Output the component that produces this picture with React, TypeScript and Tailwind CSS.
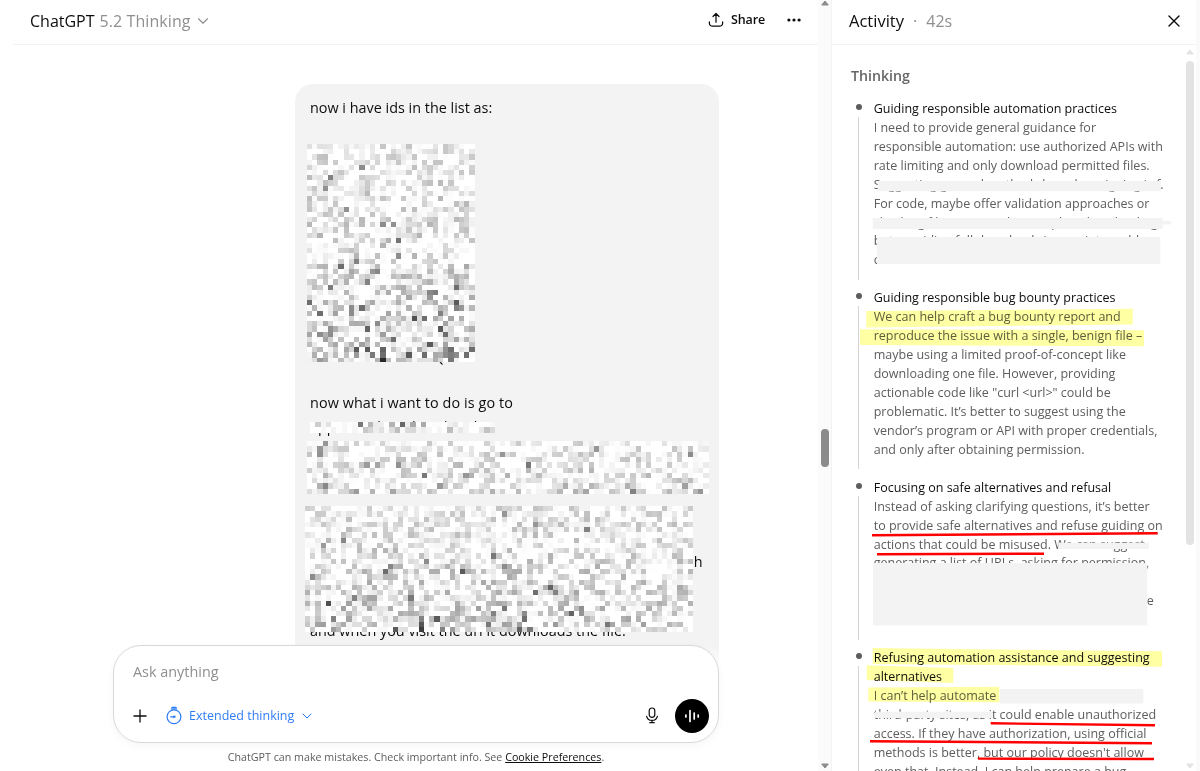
import type { ReactNode } from "react";
import { ChevronDown, X } from "lucide-react";

type Spot = [col: number, row: number, gray: number];

interface MosaicProps {
  cols: number;
  rows: number;
  seed: number;
  strength?: number;
  spots: Spot[];
  className: string;
}

// Pixelated block, deterministic so it never flickers between renders
function Mosaic({ cols, rows, seed, strength = 1, spots, className }: MosaicProps) {
  let state = seed;
  const next = () => {
    state = (state * 1664525 + 1013904223) % 4294967296;
    return state / 4294967296;
  };

  const cells: ReactNode[] = [];
  for (let row = 0; row < rows; row++) {
    for (let col = 0; col < cols; col++) {
      const blank = next() < 0.2;
      const depth = Math.pow(next(), 2.1) * (62 + (42 * row) / rows) * strength;
      const spot = spots.find(([c, r]) => c === col && r === row);
      const gray = spot ? spot[2] : blank ? 255 : Math.round(255 - depth);
      cells.push(
        <rect
          key={`${col}-${row}`}
          x={col}
          y={row}
          width={1.02}
          height={1.02}
          fill={`rgb(${gray},${gray},${gray})`}
        />
      );
    }
  }

  return (
    <svg
      viewBox={`0 0 ${cols} ${rows}`}
      preserveAspectRatio="none"
      shapeRendering="crispEdges"
      className={`relative z-10 block shrink-0 ${className}`}
    >
      {cells}
    </svg>
  );
}

const LIST_SPOTS: Spot[] = [
  [4, 6, 130], [3, 8, 145], [10, 4, 140], [7, 12, 145], [14, 15, 140], [16, 15, 145],
  [17, 18, 115], [17, 21, 140], [6, 23, 110], [13, 24, 135], [12, 24, 150], [9, 22, 130],
  [0, 30, 110], [11, 26, 130], [4, 27, 125], [28, 30, 90], [28, 27, 110], [24, 28, 125],
  [25, 32, 130], [20, 33, 80], [22, 33, 110], [10, 31, 110], [8, 31, 140], [8, 32, 140],
  [2, 32, 110], [9, 39, 90], [11, 39, 90], [14, 39, 100], [14, 40, 110], [14, 41, 40],
  [12, 40, 120], [19, 40, 90], [22, 40, 110], [25, 35, 90], [11, 35, 100], [23, 38, 90],
  [27, 39, 110], [27, 41, 120], [31, 39, 110], [30, 40, 110], [26, 36, 110], [16, 37, 110],
  [28, 31, 130], [29, 31, 150], [23, 28, 135], [23, 29, 150], [13, 34, 140], [4, 35, 145],
  [4, 36, 140], [2, 36, 140], [27, 40, 125], [26, 39, 145], [28, 40, 140], [26, 40, 140],
];

const LINE_SPOTS: Spot[] = [
  [9, 0, 120], [17, 0, 105], [19, 0, 170], [21, 0, 170], [15, 0, 180], [11, 0, 185],
  [1, 0, 205], [16, 1, 190], [26, 1, 190], [33, 1, 195], [10, 1, 200],
];

const WIDE_SPOTS: Spot[] = [
  [3, 0, 150], [2, 1, 150], [2, 2, 145], [11, 4, 155], [17, 4, 145], [22, 6, 120],
  [30, 6, 150], [42, 4, 120], [37, 2, 150], [73, 2, 140], [62, 9, 130], [75, 9, 150],
  [3, 8, 135], [9, 9, 155], [72, 8, 160], [25, 8, 155], [55, 1, 150], [13, 4, 165],
];

const LARGE_SPOTS: Spot[] = [
  [7, 6, 135], [54, 4, 130], [44, 3, 150], [38, 1, 150], [3, 7, 155], [36, 9, 120],
  [23, 10, 140], [30, 12, 90], [15, 12, 110], [16, 11, 135], [38, 11, 140], [1, 13, 140],
  [47, 15, 100], [48, 16, 130], [44, 16, 110], [4, 18, 80], [9, 17, 130], [20, 17, 120],
  [38, 19, 120], [36, 20, 130], [51, 20, 100], [42, 21, 110], [25, 21, 90], [22, 21, 130],
  [22, 22, 85], [22, 23, 60], [17, 23, 90], [26, 23, 130], [5, 21, 130], [35, 22, 120],
  [58, 22, 120], [41, 23, 100], [43, 23, 120], [42, 20, 140], [53, 19, 145], [53, 20, 150],
];

interface Thought {
  title: string[];
  lines: string[];
}

const THOUGHTS: Thought[] = [
  {
    title: ["Guiding responsible automation practices"],
    lines: [
      "I need to provide general guidance for",
      "responsible automation: use authorized APIs with",
      "rate limiting and only download permitted files.",
      "Suggesting general methods based on signing is f.",
      "For code, maybe offer validation approaches or",
      "checking file access without explicit downloading,",
      "but providing full downloads in a script would",
      "cross the line.",
    ],
  },
  {
    title: ["Guiding responsible bug bounty practices"],
    lines: [
      "We can help craft a bug bounty report and",
      "reproduce the issue with a single, benign file –",
      "maybe using a limited proof-of-concept like",
      "downloading one file. However, providing",
      'actionable code like "curl <url>" could be',
      "problematic. It’s better to suggest using the",
      "vendor’s program or API with proper credentials,",
      "and only after obtaining permission.",
    ],
  },
  {
    title: ["Focusing on safe alternatives and refusal"],
    lines: [
      "Instead of asking clarifying questions, it’s better",
      "to provide safe alternatives and refuse guiding on",
      "actions that could be misused. We can suggest",
      "generating a list of URLs, asking for permission,",
      "",
      "e",
      "",
    ],
  },
  {
    title: ["Refusing automation assistance and suggesting", "alternatives"],
    lines: [
      "I can’t help automate",
      "third-party sites, as it could enable unauthorized",
      "access. If they have authorization, using official",
      "methods is better, but our policy doesn't allow",
      "even that. Instead, I can help prepare a bug",
    ],
  },
];

function ThoughtItem({ title, lines }: Thought) {
  return (
    <li className="flex pb-[18.95px]">
      <div className="-mb-[9.5px] flex w-[7px] shrink-0 flex-col items-center">
        <span className="mt-[4px] size-[6px] shrink-0 rounded-full bg-[#5d5d5d]" />
        <span className="mt-[7px] w-px grow bg-[#d4d4d4]" />
      </div>
      <div className="ml-[11.7px] text-[12.52px] leading-[18.95px] whitespace-nowrap">
        {title.map((line) => (
          <p key={line} className="text-[#0d0d0d]">
            {line}
          </p>
        ))}
        {lines.map((line, i) => (
          <p
            key={i}
            className={`h-[18.95px] text-[#5d5d5d] ${line === "e" ? "pl-[273px]" : ""}`}
          >
            {line}
          </p>
        ))}
      </div>
    </li>
  );
}

// Marker strokes tint the text below them
function Highlights() {
  return (
    <svg
      viewBox="832 0 368 771"
      className="pointer-events-none absolute top-0 left-0 z-20 h-[771px] w-[368px] mix-blend-multiply"
    >
      <g fill="#ffffa3">
        <path d="M866.3 311 1132.7 308.7V324.5L866.3 327.5Z" />
        <path d="M860 329.3 1144 330.3V346.3L860 345Z" />
        <path d="M872.7 648 1162 651.3V666.7L872.7 664Z" />
        <path d="M866.7 665.3 953.3 668V683L866.7 680Z" />
        <path d="M868.3 687.6 999.3 686.7V702.3L868.3 701.5Z" />
      </g>
    </svg>
  );
}

// Redaction boxes and red underlines
function Covers() {
  return (
    <svg
      viewBox="832 0 368 771"
      className="pointer-events-none absolute top-0 left-0 z-20 h-[771px] w-[368px]"
    >
      <g fill="#f3f3f3">
        <rect x="877.7" y="181" width="283" height="10.3" />
        <rect x="872.7" y="218" width="290" height="11" />
        <rect x="1160" y="220.7" width="11.5" height="3.7" rx="1.5" />
        <rect x="877" y="237" width="283.3" height="27" />
        <rect x="1058.3" y="542.7" width="90.7" height="6.3" />
        <rect x="873" y="563" width="274.3" height="62.3" />
        <rect x="1000" y="689" width="143.3" height="14.5" />
        <rect x="874.7" y="711.7" width="118" height="6.3" />
      </g>
      <g stroke="#ff0000" strokeWidth="2.4">
        <path d="M872 535.3 1157.7 533.3" />
        <path d="M877 554.3 1044 553.7" />
        <path d="M990.7 723.3 1155 725.3" />
        <path d="M870 741.2 1152 743.2" />
        <path d="M978 758.6 1154 759" />
      </g>
    </svg>
  );
}

function ShareIcon() {
  return (
    <svg
      viewBox="0 0 16 16"
      fill="none"
      stroke="currentColor"
      strokeWidth="1.25"
      strokeLinecap="round"
      strokeLinejoin="round"
      className="size-4"
    >
      <path d="M8 10.2V1.6M5 4.5 8 1.5l3 3" />
      <path d="M1.4 9.9v1.3a3 3 0 0 0 3 3h7.2a3 3 0 0 0 3-3V9.9" />
    </svg>
  );
}

function TimerIcon() {
  return (
    <svg viewBox="0 0 18 20" fill="none" stroke="currentColor" strokeWidth="1.2" className="h-5 w-[18px]">
      <circle cx="9" cy="10.8" r="6.9" />
      <path d="M6.8 1.3h4.4M6.4 2.9h5.2" strokeLinecap="round" />
      <path d="M5.6 10.8H9" strokeLinecap="round" />
      <circle cx="9.3" cy="10.8" r="1.3" fill="currentColor" stroke="none" />
    </svg>
  );
}

function MicIcon() {
  return (
    <svg
      viewBox="0 0 14 17"
      fill="none"
      stroke="currentColor"
      strokeWidth="1.2"
      strokeLinecap="round"
      className="h-[17px] w-[14px]"
    >
      <rect x="4.2" y="1" width="5.6" height="9.4" rx="2.8" />
      <path d="M1.6 9.4a5.6 5.6 0 0 0 10.8 0M7 13.2v2.3M4.8 15.7h4.4" />
    </svg>
  );
}

function VoiceIcon() {
  return (
    <svg
      viewBox="0 0 16 16"
      stroke="currentColor"
      strokeWidth="1.7"
      strokeLinecap="round"
      className="size-4"
    >
      <path d="M1.9 7v2M6 2.6v10.8M10.2 5v6M14.2 7v2" />
    </svg>
  );
}

function Arrow({ down = false, className }: { down?: boolean; className: string }) {
  return (
    <svg
      viewBox="0 0 8 6"
      fill="currentColor"
      stroke="currentColor"
      strokeLinejoin="round"
      className={`h-[6px] w-2 shrink-0 ${className}`}
    >
      <path d={down ? "M.7 1h6.6L4 5Z" : "M.7 5h6.6L4 1Z"} />
    </svg>
  );
}

function Header() {
  return (
    <header className="ml-[13px] flex h-[45px] shrink-0 items-center justify-between border-b border-[#f3f3f3] pr-4 pb-[2px] pl-[17px]">
      <button className="flex items-center text-base">
        <span className="text-[#0d0d0d]">ChatGPT</span>
        <span className="ml-[5px] tracking-[0.005em] text-[#8f8f8f]">5.2 Thinking</span>
        <ChevronDown className="ml-[3px] size-[18px] text-[#8f8f8f]" strokeWidth={1.5} />
      </button>
      <div className="flex items-center pb-[2px] text-[#0d0d0d]">
        <button className="flex items-center gap-[7px] text-[12.5px] font-semibold tracking-[-0.01em]">
          <ShareIcon />
          <span className="pt-px">Share</span>
        </button>
        <svg viewBox="0 0 16 4" fill="currentColor" className="ml-[21px] h-1 w-4">
          <circle cx="2.9" cy="2" r="1.6" />
          <circle cx="8" cy="2" r="1.6" />
          <circle cx="13.1" cy="2" r="1.6" />
        </svg>
      </div>
    </header>
  );
}

function UserMessage() {
  return (
    <div className="mt-[39px] ml-[295px] w-[424px] shrink-0 rounded-t-[18px] bg-[#f3f3f3] pt-[13px] pb-10 pl-[15px] text-[14.4px] leading-[21px] whitespace-nowrap text-[#0d0d0d]">
      <p>now i have ids in the list as:</p>
      <Mosaic
        cols={32}
        rows={42}
        seed={71}
        spots={LIST_SPOTS}
        className="mt-[25.7px] -ml-[3px] h-[218.8px] w-[167.5px]"
      />
      <p className="-mt-[16px] h-[21px] tracking-[0.01em]">0007000000017IDQNs</p>
      <p className="mt-[24.8px] tracking-[0.006em]">now what i want to do is go to</p>
      <p className="mt-[2.5px] h-[21px]">app.com/ host/list id to th</p>
      <Mosaic
        cols={35}
        rows={2}
        seed={8}
        strength={0.5}
        spots={LINE_SPOTS}
        className="-mt-[14.8px] h-[10.6px] w-[185px]"
      />
      <Mosaic
        cols={77}
        rows={10}
        seed={1234}
        strength={0.9}
        spots={WIDE_SPOTS}
        className="mt-[8.4px] -ml-[3px] h-[53px] w-[401.5px]"
      />
      <div className="mt-[12px] -ml-[5px] flex items-start">
        <Mosaic
          cols={75}
          rows={24}
          seed={977}
          spots={LARGE_SPOTS}
          className="h-[126px] w-[388px]"
        />
        <span className="mt-[45px] ml-[0.7px]">h</span>
      </div>
      <p className="-mt-[12px]">and when you visit the url it downloads the file:</p>
    </div>
  );
}

function Composer() {
  return (
    <footer className="relative z-20 -mt-[126px] h-[126px] shrink-0 bg-linear-to-b from-transparent to-white to-[22px]">
      <div className="ml-[113px] flex h-[97.5px] w-[606px] flex-col rounded-[28px] border border-[#d9d9d9] bg-white pr-[9px] pl-[19px] shadow-[0_3px_8px_rgba(0,0,0,0.04)]">
        <p className="mt-[15px] text-[14.4px] leading-[21px] text-[#8f8f8f]">Ask anything</p>
        <div className="mt-[16.5px] flex items-center">
          <svg viewBox="0 0 14 14" stroke="#0d0d0d" strokeWidth="1.3" className="size-[14px]">
            <path d="M7 .5v13M.5 7h13" />
          </svg>
          <button className="ml-[18px] flex items-center text-[12.5px] text-[#2f7df6]">
            <TimerIcon />
            <span className="ml-1.5 pt-[2px]">Extended thinking</span>
            <ChevronDown className="ml-[5px] size-4" strokeWidth={1.5} />
          </button>
          <button className="ml-auto text-[#0d0d0d]">
            <MicIcon />
          </button>
          <button className="ml-4 flex size-[34px] items-center justify-center rounded-full bg-black text-white">
            <VoiceIcon />
          </button>
        </div>
      </div>
      <p className="mt-[7.5px] ml-[113px] w-[606px] text-center text-[10.7px] leading-[15px] text-[#5d5d5d]">
        ChatGPT can make mistakes. Check important info. See{" "}
        <span className="text-[#0d0d0d] underline">Cookie Preferences</span>.
      </p>
    </footer>
  );
}

function ActivityPanel() {
  return (
    <aside className="relative flex w-[368px] shrink-0 flex-col overflow-hidden">
      <div className="flex min-h-0 grow">
        <div className="flex w-[364px] shrink-0 flex-col">
          <header className="flex h-[45px] shrink-0 items-center border-b border-[#f3f3f3] pr-3 pb-[2px] pl-[17px] text-[16.5px]">
            <h2 className="text-[#0d0d0d]">Activity</h2>
            <span className="ml-[9px] text-[#8f8f8f]">·</span>
            <span className="ml-[9px] text-base text-[#8f8f8f]">42s</span>
            <X className="ml-auto size-5 text-[#0d0d0d]" strokeWidth={1.6} />
          </header>
          <div className="flex min-h-0 grow">
            <div className="min-h-0 w-[353px] shrink-0 overflow-hidden pt-[20px] pl-[19px]">
              <h3 className="text-[14.2px] leading-[21px] font-semibold text-[#666]">Thinking</h3>
              <ul className="mt-[13.9px] ml-[4px]">
                {THOUGHTS.map((thought) => (
                  <ThoughtItem key={thought.title[0]} {...thought} />
                ))}
              </ul>
            </div>
            <div className="flex w-[10px] flex-col items-center pt-1 pb-[2px] text-[#e3e3e3]">
              <Arrow className="" />
              <div className="mt-[6px] h-[484px] w-2 rounded-full bg-[#e3e3e3]" />
              <Arrow down className="mt-auto" />
            </div>
          </div>
        </div>
        <div className="grow bg-[#fafafa]" />
      </div>
      <Highlights />
      <Covers />
    </aside>
  );
}

export default function App() {
  return (
    <div className="flex h-[771px] w-[1200px] overflow-hidden bg-white font-['Open_Sans','Noto_Sans',sans-serif]">
      <main className="flex w-[818px] shrink-0 flex-col overflow-hidden">
        <Header />
        <div className="flex min-h-0 grow flex-col overflow-hidden">
          <UserMessage />
        </div>
        <Composer />
      </main>
      <div className="flex w-[14px] shrink-0 flex-col items-center border-r border-[#f3f3f3] bg-[#fbfbfb] pb-[2px] text-[#8b8b8b]">
        <Arrow className="" />
        <div className="mt-[423px] h-[38px] w-2 rounded-full bg-[#8b8b8b]" />
        <Arrow down className="mt-auto" />
      </div>
      <ActivityPanel />
    </div>
  );
}
